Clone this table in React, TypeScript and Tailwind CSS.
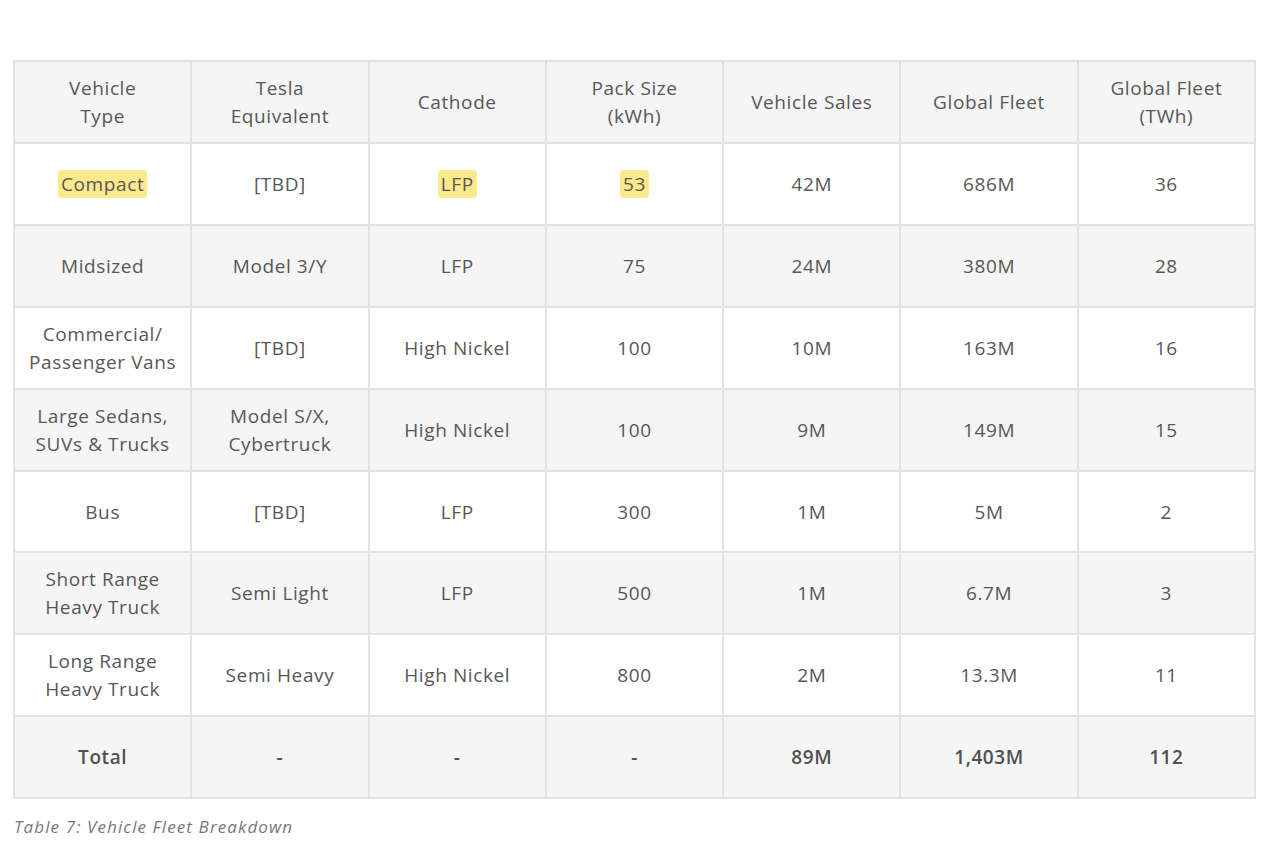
const headers = [
  ["Vehicle", "Type"],
  ["Tesla", "Equivalent"],
  ["Cathode"],
  ["Pack Size", "(kWh)"],
  ["Vehicle Sales"],
  ["Global Fleet"],
  ["Global Fleet", "(TWh)"],
]

type Cell = { lines: string[]; mark?: boolean }

const c = (text: string, mark = false): Cell => ({ lines: text.split("\n"), mark })

const rows: Cell[][] = [
  [c("Compact", true), c("[TBD]"), c("LFP", true), c("53", true), c("42M"), c("686M"), c("36")],
  [c("Midsized"), c("Model 3/Y"), c("LFP"), c("75"), c("24M"), c("380M"), c("28")],
  [c("Commercial/\nPassenger Vans"), c("[TBD]"), c("High Nickel"), c("100"), c("10M"), c("163M"), c("16")],
  [c("Large Sedans,\nSUVs & Trucks"), c("Model S/X,\nCybertruck"), c("High Nickel"), c("100"), c("9M"), c("149M"), c("15")],
  [c("Bus"), c("[TBD]"), c("LFP"), c("300"), c("1M"), c("5M"), c("2")],
  [c("Short Range\nHeavy Truck"), c("Semi Light"), c("LFP"), c("500"), c("1M"), c("6.7M"), c("3")],
  [c("Long Range\nHeavy Truck"), c("Semi Heavy"), c("High Nickel"), c("800"), c("2M"), c("13.3M"), c("11")],
]

const total = ["Total", "-", "-", "-", "89M", "1,403M", "112"]

function Lines({ cell }: { cell: Cell }) {
  return (
    <>
      {cell.lines.map((l, i) => (
        <div key={i}>
          {cell.mark ? <span className="bg-[#fbe98c] rounded-[4px] px-[3px] py-[1px]">{l}</span> : l}
        </div>
      ))}
    </>
  )
}

export default function App() {
  return (
    <div className="min-h-[854px] bg-white pt-[60px] pl-[13px] font-['Open_Sans',sans-serif] text-[#575757]">
      <table className="w-[1243px] table-fixed border-collapse border-2 border-[#e2e2e2] text-[19px] leading-[28px] tracking-[0.6px]">
        <thead>
          <tr className="h-[82px] bg-[#f5f5f5]">
            {headers.map((h, i) => (
              <th key={i} className="border-2 border-[#e2e2e2] font-normal text-center align-middle">
                {h.map((l, j) => (
                  <div key={j}>{l}</div>
                ))}
              </th>
            ))}
          </tr>
        </thead>
        <tbody>
          {rows.map((r, i) => (
            <tr key={i} className={i % 2 === 1 ? "h-[82px] bg-[#f5f5f5]" : i === 4 ? "h-[81px] bg-white" : "h-[82px] bg-white"}>
              {r.map((cell, j) => (
                <td key={j} className="border-2 border-[#e2e2e2] text-center align-middle">
                  <Lines cell={cell} />
                </td>
              ))}
            </tr>
          ))}
          <tr className="h-[82px] bg-[#f5f5f5]">
            {total.map((t, j) => (
              <td key={j} className="border-2 border-[#e2e2e2] text-center align-middle font-semibold text-[#505050]">
                {t}
              </td>
            ))}
          </tr>
        </tbody>
      </table>
      <p className="mt-[15px] ml-[1px] text-[17px] italic tracking-[1.1px] text-[#777]">Table 7: Vehicle Fleet Breakdown</p>
    </div>
  )
}
